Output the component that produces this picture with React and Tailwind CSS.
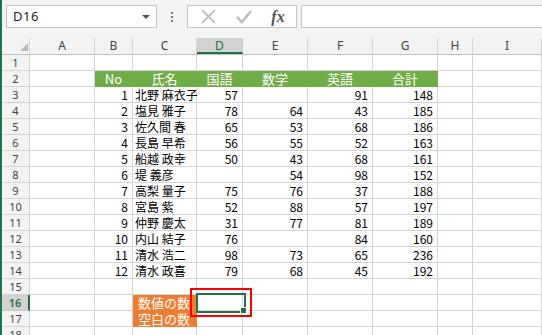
import React from 'react';

// column widths in px: A..I (I fills the rest)
const COLS = [
  { key: 'A', w: 'w-[65px]' },
  { key: 'B', w: 'w-[38px]' },
  { key: 'C', w: 'w-[64px]' },
  { key: 'D', w: 'w-[46px]' },
  { key: 'E', w: 'w-[65px]' },
  { key: 'F', w: 'w-[65px]' },
  { key: 'G', w: 'w-[65px]' },
  { key: 'H', w: 'w-[35px]' },
  { key: 'I', w: 'flex-1' },
];

const STUDENTS = [
  [1, '北野 麻衣子', 57, null, 91, 148],
  [2, '塩見 雅子', 78, 64, 43, 185],
  [3, '佐久間 春', 65, 53, 68, 186],
  [4, '長島 早希', 56, 55, 52, 163],
  [5, '船越 政幸', 50, 43, 68, 161],
  [6, '堤 義彦', null, 54, 98, 152],
  [7, '高梨 量子', 75, 76, 37, 188],
  [8, '宮島 紫', 52, 88, 57, 197],
  [9, '仲野 慶太', 31, 77, 81, 189],
  [10, '内山 結子', 76, null, 84, 160],
  [11, '清水 浩二', 98, 73, 65, 236],
  [12, '清水 政喜', 79, 68, 45, 192],
];

const HEADS = ['No', '氏名', '国語', '数学', '英語', '合計'];

const cellFont = { fontFamily: '"Noto Sans CJK JP", "Noto Sans", sans-serif' };
const uiFont = { fontFamily: '"Noto Sans", "Open Sans", sans-serif' };

// build cell contents for a given sheet row
function rowCells(r) {
  const cells = COLS.map(() => ({ text: '', kind: 'plain' }));
  if (r === 2) {
    HEADS.forEach((h, i) => {
      cells[i + 1] = { text: h, kind: 'head' };
    });
  } else if (r >= 3 && r <= 14) {
    const s = STUDENTS[r - 3];
    cells[1] = { text: s[0], kind: 'num' };
    cells[2] = { text: s[1], kind: 'name' };
    for (let i = 2; i < 6; i++) cells[i + 1] = { text: s[i] ?? '', kind: 'num' };
  } else if (r === 16) {
    cells[2] = { text: '数値の数', kind: 'orange' };
  } else if (r === 17) {
    cells[2] = { text: '空白の数', kind: 'orange' };
  }
  return cells;
}

function Cell({ col, cell }) {
  let cls = `${col.w} h-full shrink-0 border-r border-b whitespace-nowrap overflow-visible `;
  if (cell.kind === 'head') {
    cls += 'bg-[#70ad47] border-[#70ad47] text-white text-[13px] text-center leading-[15px]';
  } else if (cell.kind === 'orange') {
    cls += 'bg-[#ed7d31] border-[#ed7d31] text-white text-[13px] pl-[5px] leading-[15px]';
  } else if (cell.kind === 'num') {
    cls += 'bg-white border-[#d4d4d4] text-black text-[12px] text-right pr-[4px] leading-[16px]';
  } else if (cell.kind === 'name') {
    cls += 'bg-white border-[#d4d4d4] text-black text-[12px] pl-[2px] leading-[16px]';
  } else {
    cls += 'bg-white border-[#d4d4d4]';
  }
  return (
    <div className={cls} style={cellFont}>
      {cell.text}
    </div>
  );
}

function Toolbar() {
  return (
    <div className="h-[38px] flex items-start pt-[5px] pl-[4px]">
      <div className="w-[151px] h-[23px] bg-white border border-[#c6c6c6] flex items-center justify-between pl-[6px] pr-[6px]">
        <span className="text-[13px] text-[#222] tracking-[0.5px]" style={uiFont}>D16</span>
        <span className="w-0 h-0 border-l-[4px] border-r-[4px] border-t-[4px] border-l-transparent border-r-transparent border-t-[#555]" />
      </div>
      <div className="w-[30px] h-[23px] flex flex-col items-center justify-center gap-[2px]">
        <span className="w-[2px] h-[2px] bg-[#777]" />
        <span className="w-[2px] h-[2px] bg-[#777]" />
        <span className="w-[2px] h-[2px] bg-[#777]" />
      </div>
      <div className="w-[110px] h-[23px] bg-white border border-[#c6c6c6] flex items-center">
        <div className="w-[40px] flex justify-center">
          <svg width="17" height="17" viewBox="0 0 16 16">
            <path d="M2 2 L14 14 M14 2 L2 14" stroke="#bdbdbd" strokeWidth="1.7" fill="none" />
          </svg>
        </div>
        <div className="w-[32px] flex justify-center">
          <svg width="18" height="16" viewBox="0 0 18 16">
            <path d="M2 8 L7 13 L16 2" stroke="#bdbdbd" strokeWidth="2.6" fill="none" />
          </svg>
        </div>
        <div className="flex-1 flex justify-center">
          <span className="text-[16px] italic font-bold text-[#555] leading-none" style={{ fontFamily: '"Liberation Serif", serif' }}>
            fx
          </span>
        </div>
      </div>
      <div className="ml-[4px] flex-1 h-[23px] bg-white border border-[#c6c6c6] border-r-0" />
    </div>
  );
}

function ColumnHeader() {
  return (
    <div className="h-[17px] flex border-b border-[#bfbfbf]">
      <div className="w-[28px] h-full shrink-0 border-r border-[#d4d4d4] relative">
        <svg className="absolute left-[18px] top-[5px]" width="8" height="8" viewBox="0 0 8 8">
          <path d="M8 0 L8 8 L0 8 Z" fill="#b8b8b8" />
        </svg>
      </div>
      {COLS.map((c) =>
        c.key === 'D' ? (
          <div key={c.key} className={`${c.w} h-full shrink-0 bg-[#d2d2d2] border-r border-[#c6c6c6] border-b-2 border-b-[#217346] text-center text-[12px] leading-[16px] text-[#217346]`} style={uiFont}>
            {c.key}
          </div>
        ) : (
          <div key={c.key} className={`${c.w} h-full shrink-0 border-r border-[#d4d4d4] text-center text-[12px] leading-[16px] text-[#444]`} style={uiFont}>
            {c.key}
          </div>
        )
      )}
    </div>
  );
}

export default function App() {
  const rows = Array.from({ length: 18 }, (_, i) => i + 1);
  return (
    <div className="relative w-[542px] h-[335px] overflow-hidden bg-[#f3f3f3] border-l-2 border-[#217346]">
      <Toolbar />
      <ColumnHeader />
      {rows.map((r) => (
        <div key={r} className="h-[16px] flex">
          {r === 16 ? (
            <div className="w-[28px] h-full shrink-0 bg-[#d2d2d2] border-r-2 border-[#217346] border-b border-b-[#c6c6c6] text-center text-[11px] leading-[15px] font-semibold text-[#217346]" style={uiFont}>
              {r}
            </div>
          ) : (
            <div className="w-[28px] h-full shrink-0 border-r border-b border-[#d4d4d4] text-center text-[11px] leading-[15px] text-[#444]" style={uiFont}>
              {r}
            </div>
          )}
          {rowCells(r).map((cell, i) => (
            <Cell key={COLS[i].key} col={COLS[i]} cell={cell} />
          ))}
        </div>
      ))}

      {/* active cell D16 */}
      <div className="absolute left-[194px] top-[293px] w-[50px] h-[20px] border-2 border-[#217346]" />
      <div className="absolute left-[238px] top-[307px] w-[7px] h-[7px] bg-[#217346] border border-white" />

      {/* red annotation frame */}
      <div className="absolute left-[188px] top-[288px] w-[62px] h-[29px] border-2 border-[#ff0000]" />
    </div>
  );
}
